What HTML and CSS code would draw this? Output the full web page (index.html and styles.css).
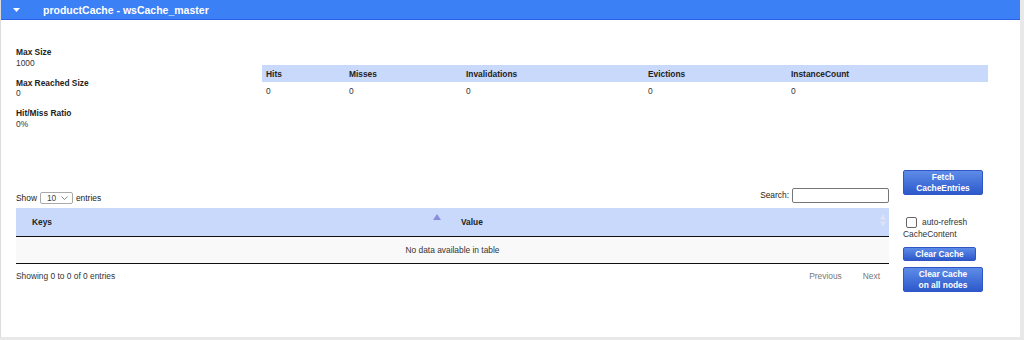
FILE: index.html
```html
<!DOCTYPE html>
<html lang="en">
<head>
  <meta charset="UTF-8" />
  <title>productCache - wsCache_master</title>
  <link rel="stylesheet" href="styles.css">
</head>
<body>
  <div class="panel">
    <div class="panel-head">
      <span class="caret">
        <svg width="7" height="4" viewBox="0 0 7 4"><path d="M0 0h7L3.5 4z" fill="#fff"/></svg>
      </span>
      <span class="title">productCache - wsCache_master</span>
    </div>

    <div class="panel-body">
      <div class="stats-row">
        <div class="stats">
          <div class="stat">
            <div class="stat-label">Max Size</div>
            <div class="stat-value">1000</div>
          </div>
          <div class="stat">
            <div class="stat-label">Max Reached Size</div>
            <div class="stat-value">0</div>
          </div>
          <div class="stat">
            <div class="stat-label">Hit/Miss Ratio</div>
            <div class="stat-value">0%</div>
          </div>
        </div>

        <table class="counters">
          <thead>
            <tr>
              <th class="c-hits">Hits</th>
              <th class="c-misses">Misses</th>
              <th class="c-inval">Invalidations</th>
              <th class="c-evict">Evictions</th>
              <th>InstanceCount</th>
            </tr>
          </thead>
          <tbody>
            <tr>
              <td>0</td><td>0</td><td>0</td><td>0</td><td>0</td>
            </tr>
          </tbody>
        </table>
      </div>

      <div class="cache-row">
        <div class="cache-main">
          <div class="controls">
            <label class="length">
              Show
              <span class="select-wrap">
                <select class="select">
                  <option>10</option>
                  <option>25</option>
                  <option>50</option>
                </select>
                <svg class="chev" width="7" height="4" viewBox="0 0 7 4"><path d="M0.5 0.5L3.5 3.5L6.5 0.5" fill="none" stroke="#777" stroke-width="0.9"/></svg>
              </span>
              entries
            </label>
            <label class="search">
              Search: <input type="text" />
            </label>
          </div>

          <table class="entries">
            <thead>
              <tr>
                <th class="col-keys">
                  <span>Keys</span>
                  <svg class="sort-asc" width="8" height="6" viewBox="0 0 8 6"><path d="M4 0L8 6H0z" fill="#8b8bdc"/></svg>
                </th>
                <th class="col-value">
                  <span>Value</span>
                  <svg class="sort-both" width="6" height="13" viewBox="0 0 6 13"><path d="M3 0L6 5.5H0z M3 13L0 7.5H6z" fill="#dde3f3"/></svg>
                </th>
              </tr>
            </thead>
            <tbody>
              <tr>
                <td colspan="2" class="empty">No data available in table</td>
              </tr>
            </tbody>
          </table>

          <div class="table-foot">
            <div class="info">Showing 0 to 0 of 0 entries</div>
            <div class="paging">
              <a href="#">Previous</a>
              <a href="#">Next</a>
            </div>
          </div>
        </div>

        <div class="actions">
          <button class="btn btn-wide">Fetch<br>CacheEntries</button>
          <label class="refresh">
            <span class="check-line"><input type="checkbox" class="check" /> auto-refresh</span>
            CacheContent
          </label>
          <button class="btn btn-small">Clear Cache</button>
          <button class="btn btn-wide">Clear Cache<br>on all nodes</button>
        </div>
      </div>
    </div>
  </div>
</body>
</html>
```

FILE: styles.css
```css
* { box-sizing: border-box; }
body {
  margin: 0;
  background: #e8e8e8;
  font-family: 'Liberation Sans', Arial, sans-serif;
  font-size: 8.4px;
  color: #222;
}
.panel {
  width: 1020px;
  height: 337px;
  background: #fff;
  border-left: 1px solid #dcdcdc;
}
.panel-head {
  height: 20px;
  display: flex;
  align-items: center;
  background: #3c80f6;
  border-bottom: 1px solid #2c5fe6;
  color: #fff;
  font-weight: bold;
  font-size: 10.5px;
}
.caret {
  width: 42px;
  padding-left: 12px;
  display: flex;
}
.panel-body {
  padding: 27px 32px 0 15px;
}
.stats-row {
  display: flex;
}
.stats {
  width: 246px;
  display: flex;
  flex-direction: column;
  gap: 9.5px;
}
.stat {
  line-height: 10.5px;
}
.stat-label {
  font-weight: bold;
}
.stat-value {
  color: #333;
}
.counters {
  flex: 1;
  margin-top: 18px;
  align-self: flex-start;
  border-collapse: collapse;
  table-layout: fixed;
}
.counters th {
  height: 17px;
  padding: 0 4px;
  background: #c9d9fb;
  text-align: left;
  font-weight: bold;
}
.counters td {
  height: 18px;
  padding: 0 4px;
  color: #333;
}
.c-hits { width: 83px; }
.c-misses { width: 117px; }
.c-inval { width: 182px; }
.c-evict { width: 143px; }

.cache-row {
  display: flex;
  align-items: flex-start;
  margin-top: 41px;
}
.cache-main {
  width: 873px;
  padding-top: 17px;
}
.controls {
  height: 16px;
  display: flex;
  justify-content: space-between;
  align-items: center;
}
.length {
  display: flex;
  align-items: center;
  gap: 3px;
  padding-top: 6px;
}
.select-wrap {
  position: relative;
  display: flex;
}
.select {
  appearance: none;
  width: 33px;
  height: 12px;
  padding: 0 0 0 6px;
  border: 1px solid #aaa;
  border-radius: 2px;
  background: #fff;
  font: inherit;
  color: #444;
  line-height: 10px;
}
.chev {
  position: absolute;
  right: 5px;
  top: 4px;
}
.search {
  display: flex;
  align-items: center;
  gap: 3px;
}
.search input {
  width: 97px;
  height: 15px;
  border: 1px solid #767676;
  border-radius: 2px;
  padding: 0 3px;
  font: inherit;
}
.entries {
  width: 100%;
  margin-top: 5px;
  border-collapse: collapse;
  table-layout: fixed;
}
.entries th {
  height: 28px;
  background: #c9d9fb;
  border-bottom: 1px solid #111;
  text-align: left;
  font-weight: bold;
  padding: 0 0 0 16px;
}
.entries th span {
  display: inline-block;
  padding-top: 1px;
}
.col-keys { width: 429px; position: relative; }
.col-value { position: relative; }
.sort-asc {
  position: absolute;
  right: 4px;
  top: 6px;
}
.sort-both {
  position: absolute;
  right: 3px;
  top: 6px;
}
.entries td.empty {
  height: 27px;
  background: #f9f9f9;
  border-bottom: 1px solid #111;
  text-align: center;
  color: #333;
}
.table-foot {
  display: flex;
  justify-content: space-between;
  margin-top: 7px;
  padding-right: 9px;
}
.info { color: #333; }
.paging {
  display: flex;
  gap: 21px;
}
.paging a {
  color: #777;
  text-decoration: none;
}
.actions {
  width: 80px;
  margin-left: 14px;
  display: flex;
  flex-direction: column;
  align-items: flex-start;
}
.btn {
  font-family: inherit;
  font-size: 8.4px;
  font-weight: bold;
  color: #fff;
  line-height: 11px;
  background: linear-gradient(#5e8ce8, #2d59cb);
  border: 1px solid #2f56c4;
  border-radius: 2px;
  padding: 1px 0;
  cursor: pointer;
}
.btn-wide {
  width: 80px;
  height: 25px;
}
.btn-small {
  width: 73px;
  height: 14px;
  margin-top: 7px;
}
.btn-small + .btn-wide {
  margin-top: 6px;
}
.refresh {
  margin-top: 21px;
  display: flex;
  flex-direction: column;
  line-height: 12px;
  color: #333;
}
.check-line {
  display: flex;
  align-items: center;
  gap: 5px;
  padding-left: 3px;
}
.check {
  appearance: none;
  margin: 0;
  width: 11px;
  height: 11px;
  border: 1px solid #666;
  border-radius: 2px;
  background: #fff;
}
```
